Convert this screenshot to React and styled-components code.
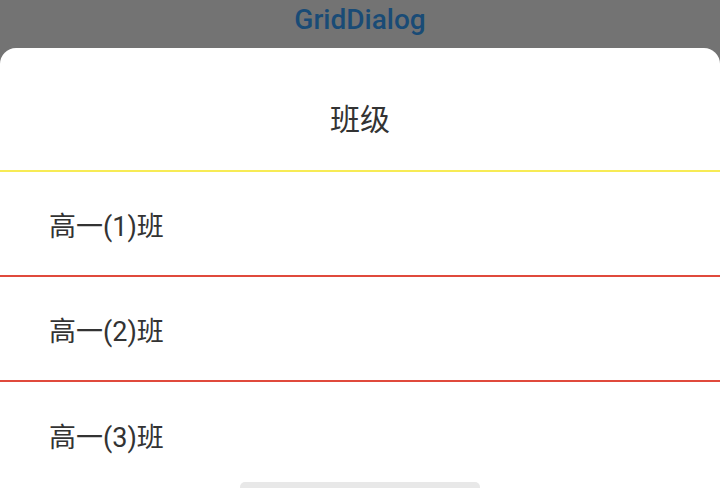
import React from "react";
import styled, { createGlobalStyle } from "styled-components";

const Global = createGlobalStyle`
  html, body { margin: 0; padding: 0; }
  body {
    width: 720px;
    height: 488px;
    overflow: hidden;
    background: #737373;
    font-family: Roboto, "Noto Sans CJK SC", sans-serif;
  }
`;

const Screen = styled.div`
  width: 720px;
  height: 488px;
  display: flex;
  flex-direction: column;
  background: #737373;
  overflow: hidden;
`;

const AppBar = styled.div`
  height: 48px;
  flex-shrink: 0;
  display: flex;
  justify-content: center;
  align-items: flex-start;
  padding-top: 6px;
  box-sizing: border-box;
  color: #194b76;
  font-family: Roboto, sans-serif;
  font-weight: 500;
  font-size: 28px;
  line-height: 28px;
`;

const Sheet = styled.div`
  position: relative;
  flex: 1;
  background: #fff;
  border-radius: 16px 16px 0 0;
  display: flex;
  flex-direction: column;
  overflow: hidden;
`;

const Header = styled.div`
  height: 124px;
  flex-shrink: 0;
  display: flex;
  align-items: center;
  justify-content: center;
  font-family: Roboto, "Noto Sans CJK SC", sans-serif;
  font-size: 30px;
  color: #333;
  border-bottom: 2px solid #f7eb55;
  box-sizing: border-box;
  padding-top: 16px;
`;

const Row = styled.div`
  height: 105px;
  flex-shrink: 0;
  display: flex;
  align-items: center;
  padding: 2px 0 0 49px;
  font-family: Roboto, "Noto Sans CJK SC", sans-serif;
  font-size: 27px;
  color: #333;
  box-sizing: border-box;
  border-bottom: ${(p) => (p.$last ? "none" : "2px solid #e04a3c")};
`;

const Handle = styled.div`
  position: absolute;
  left: 240px;
  bottom: -4px;
  width: 240px;
  height: 10px;
  border-radius: 5px;
  background: #e8e8e8;
`;

export default function App() {
  const rows = ["高一(1)班", "高一(2)班", "高一(3)班"];
  return (
    <Screen>
      <Global />
      <AppBar>GridDialog</AppBar>
      <Sheet>
        <Header>班级</Header>
        {rows.map((r, i) => (
          <Row key={r} $last={i === rows.length - 1}>
            {r}
          </Row>
        ))}
        <Handle />
      </Sheet>
    </Screen>
  );
}
